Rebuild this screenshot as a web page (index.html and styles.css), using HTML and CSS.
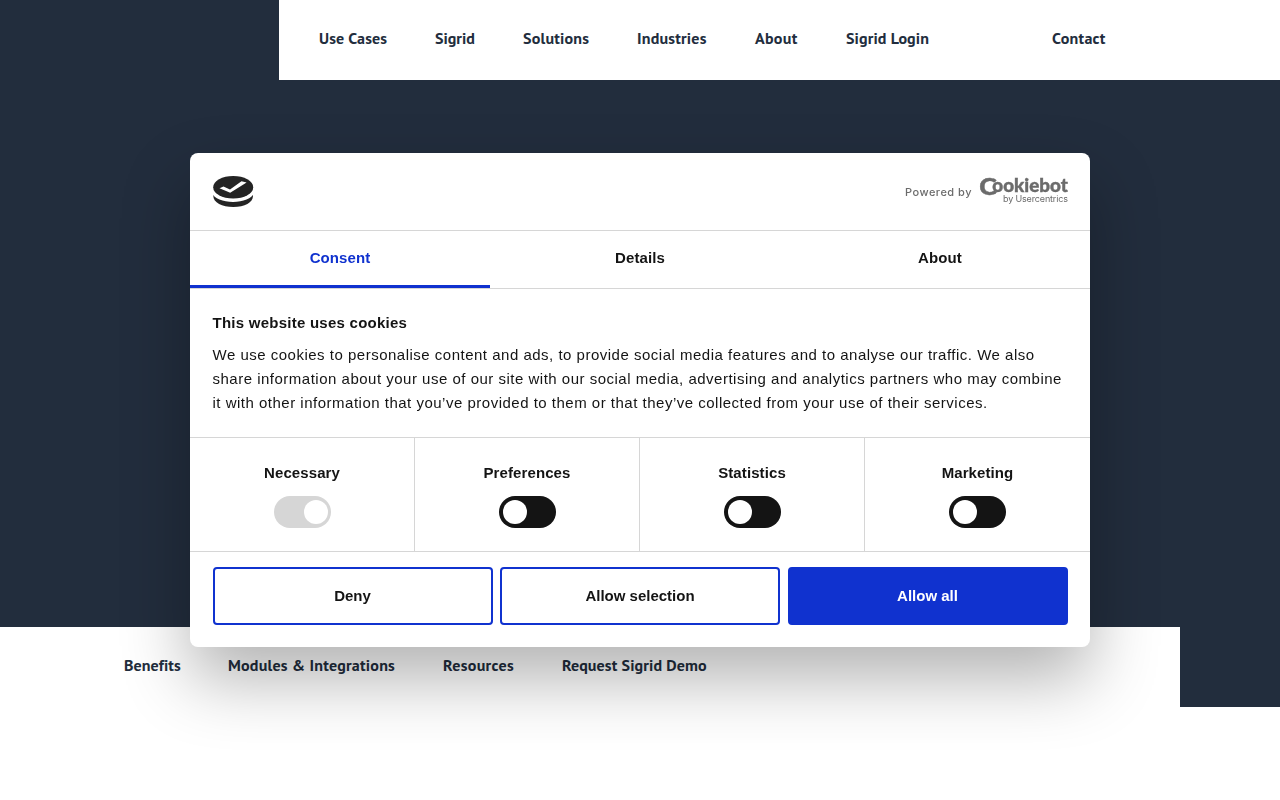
FILE: index.html
```html
<!DOCTYPE html>
<html lang="en">
<head>
<meta charset="utf-8">
<title>Sigrid</title>
<link rel="stylesheet" href="styles.css">
</head>
<body>
<header class="site-header">
  <nav class="main-nav">
    <a class="w68">Use Cases</a><a class="w40">Sigrid</a><a class="w66">Solutions</a><a class="w70">Industries</a><a class="w43">About</a><a class="w83">Sigrid Login</a><a class="w54 contact">Contact</a>
  </nav>
</header>
<main class="hero"></main>
<div class="sub-bar">
  <nav class="sub-nav">
    <a class="w56">Benefits</a><a class="w167">Modules &amp; Integrations</a><a class="w71">Resources</a><a class="w145">Request Sigrid Demo</a>
  </nav>
</div>

<section class="dialog" role="dialog">
  <div class="dialog-head">
    <svg class="badge" width="42" height="32" viewBox="0 0 42 32">
      <path d="M1.300 14V20C1.300 26.500 10 31 21.300 31S41 26.500 41 20V14Z" fill="#242424"/>
      <path d="M0 13V17C2 22.500 11 26 21 26S40 22.500 42 17V13Z" fill="#fff"/>
      <ellipse cx="21.200" cy="11.300" rx="20" ry="11.300" fill="#242424"/>
      <path d="M7.500 12.300L11.500 10.600L18 13.600L29.500 5.300L34.600 6.600L18.200 16.800Z" fill="#fff"/>
    </svg>
    <svg class="powered" width="166" height="32" viewBox="0 0 166 32">
      <text class="powered-text" x="3" y="19.500" textLength="66.500">Powered by</text>
      <text class="logo-cap" x="77.300" y="18.900" textLength="17.500" lengthAdjust="spacingAndGlyphs">C</text>
      <text class="logo-rest" x="90.300" y="16.200" textLength="75.500" lengthAdjust="spacingAndGlyphs">ookiebot</text>
      <text class="logo-by" x="101" y="26.300" textLength="65">by Usercentrics</text>
    </svg>
  </div>
  <div class="tabs">
    <a class="tab active">Consent</a><a class="tab">Details</a><a class="tab">About</a>
  </div>
  <div class="copy">
    <h2>This website uses cookies</h2>
    <p>We use cookies to personalise content and ads, to provide social media features and to analyse our traffic. We also<br>share information about your use of our site with our social media, advertising and analytics partners who may combine<br>it with other information that you’ve provided to them or that they’ve collected from your use of their services.</p>
  </div>
  <div class="options">
    <div class="option"><strong>Necessary</strong><span class="switch locked"></span></div>
    <div class="option"><strong>Preferences</strong><span class="switch"></span></div>
    <div class="option"><strong>Statistics</strong><span class="switch"></span></div>
    <div class="option"><strong>Marketing</strong><span class="switch"></span></div>
  </div>
  <div class="actions">
    <button>Deny</button><button>Allow selection</button><button class="primary">Allow all</button>
  </div>
</section>
</body>
</html>
```
FILE: styles.css
```css
* { box-sizing: border-box; }
body { margin: 0; height: 800px; overflow: hidden; background: #fff; font-family: "Liberation Sans", Arial, sans-serif; }
.site-header { height: 80px; background: #222d3d; padding-left: 279px; }
.main-nav { height: 80px; background: #fff; padding: 0 0 4px 40px; }
.main-nav, .sub-nav { display: flex; align-items: center; gap: 48px; color: #222d3d; font: 700 16px "PT Sans", "Open Sans", sans-serif; white-space: nowrap; }
.main-nav a, .sub-nav a { flex: none; }
.w40 { width: 40px; }
.w43 { width: 43px; letter-spacing: .3px; }
.w54 { width: 54px; letter-spacing: .28px; }
.w56 { width: 56px; letter-spacing: .08px; }
.w66 { width: 66px; letter-spacing: .2px; }
.w68 { width: 68px; letter-spacing: .12px; }
.w70 { width: 70px; letter-spacing: .2px; }
.w71 { width: 71px; letter-spacing: .33px; }
.w83 { width: 83px; letter-spacing: .1px; }
.w145 { width: 145px; letter-spacing: .12px; }
.w167 { width: 167px; letter-spacing: .22px; }
.contact { margin-left: 75px; }
.hero { height: 547px; background: #222d3d; }
.sub-bar { height: 80px; background: #222d3d; padding-right: 100px; }
.sub-nav { height: 80px; background: #fff; padding: 0 0 4px 124px; }

.dialog { position: fixed; left: 190px; top: 153px; width: 900px; height: 494px; background: #fff; border-radius: 8px; box-shadow: 0 32px 68px rgba(0, 0, 0, .3); color: #141414; font-size: 15px; }
.dialog-head { height: 78px; padding: 23px 22px 0; display: flex; justify-content: space-between; align-items: flex-start; border-bottom: 1px solid #d6d6d6; }
.powered { overflow: visible; }
.powered text { fill: #6b6b6b; }
.powered-text { font: 500 11px Inter, sans-serif; }
.logo-cap { font: 900 22.500px Lato, sans-serif; stroke: #6b6b6b; stroke-width: .4px; }
.logo-rest { font: 900 19px Lato, sans-serif; stroke: #6b6b6b; stroke-width: .4px; }
.logo-by { font: 400 9px Inter, sans-serif; }
.tabs { display: flex; height: 58px; border-bottom: 1px solid #d6d6d6; }
.tab { flex: 1; height: 57px; line-height: 54px; text-align: center; font-weight: 700; letter-spacing: .1px; }
.tab.active { color: #1032cf; border-bottom: 3px solid #1032cf; }
.copy { height: 148px; padding: 22px 22.500px 0; }
.copy h2 { margin: 0 0 8px; font-size: 15px; line-height: 24px; letter-spacing: .25px; }
.copy p { margin: 0; line-height: 24px; letter-spacing: .5px; white-space: nowrap; }
.options { display: flex; height: 115px; border-top: 1px solid #d6d6d6; border-bottom: 1px solid #d6d6d6; }
.option { flex: none; width: 225px; display: flex; flex-direction: column; align-items: center; padding-top: 26px; border-right: 1px solid #d6d6d6; }
.option:last-child { border-right: 0; }
.option strong { line-height: 18px; margin-bottom: 14px; letter-spacing: .1px; }
.switch { width: 57px; height: 32px; padding: 4px; border-radius: 16px; background: #141414; }
.switch::before { content: ""; display: block; width: 24px; height: 24px; border-radius: 50%; background: #fff; }
.switch.locked { background: #d6d6d6; padding-left: 30px; }
.actions { display: flex; gap: 7.500px; padding: 15px 22.500px 0; }
.actions button { flex: 1; height: 58px; padding: 0 0 2px; border: 2px solid #1032cf; border-radius: 4px; background: #fff; color: #141414; font: 700 15px "Liberation Sans", Arial, sans-serif; }
.actions .primary { background: #1032cf; color: #fff; }
```
